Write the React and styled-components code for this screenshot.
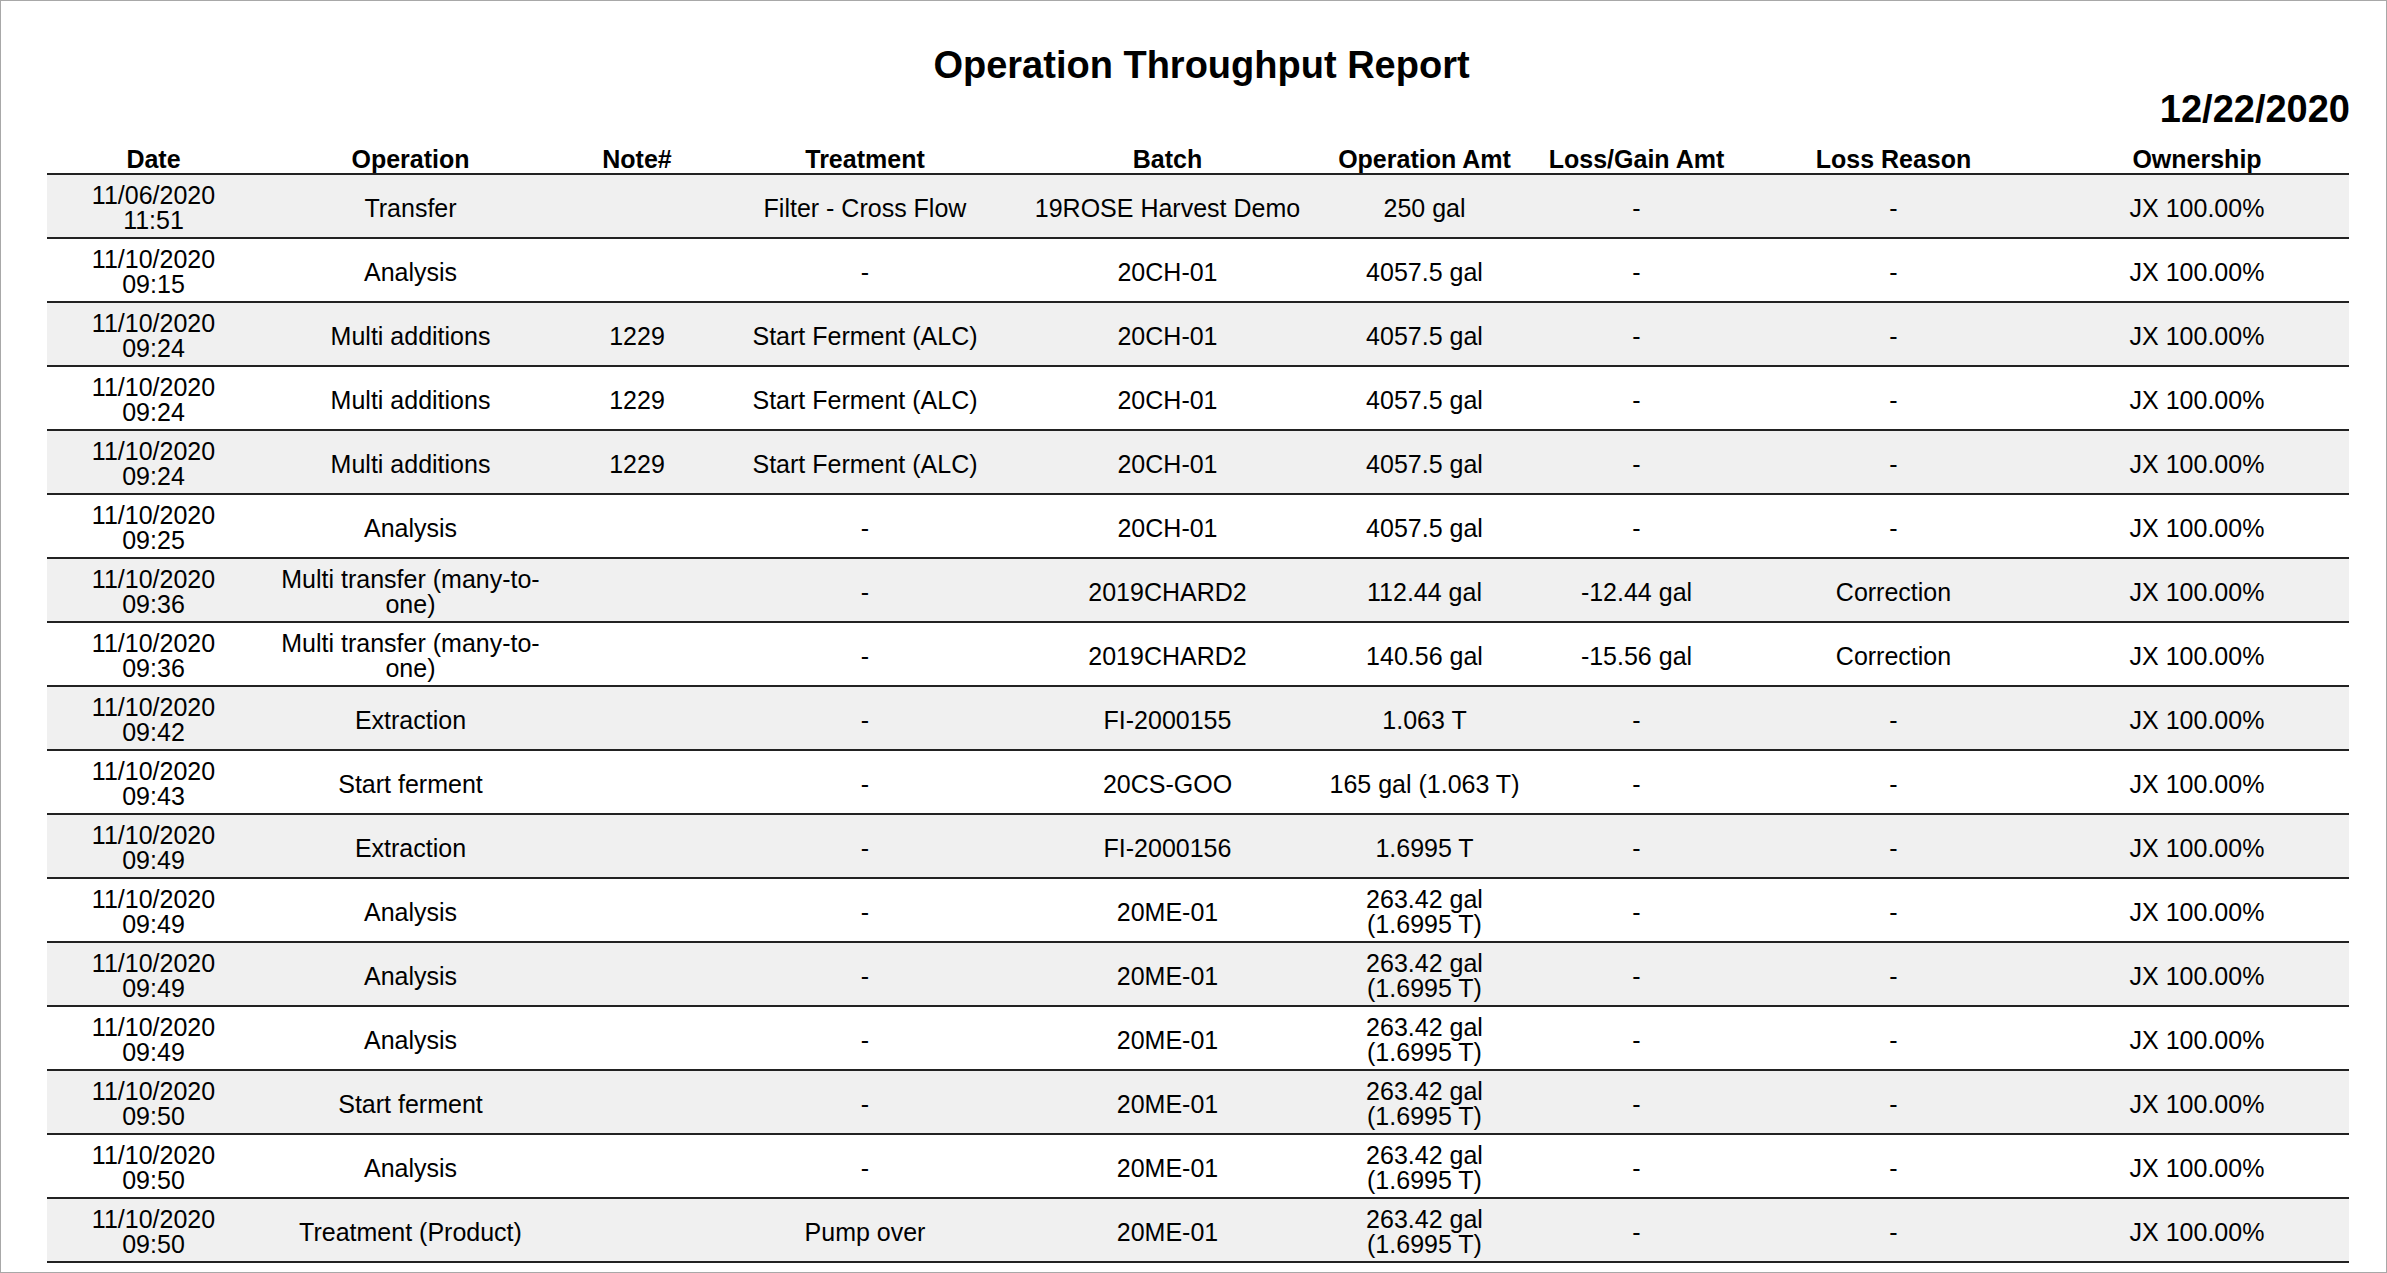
import React from 'react';
import styled, { createGlobalStyle } from 'styled-components';

const Global = createGlobalStyle`
  body { margin: 0; font-family: "Liberation Sans", Arial, sans-serif; color: #000; background: #fff; }
`;

const Frame = styled.div`
  width: 2387px;
  height: 1273px;
  box-sizing: border-box;
  border: 1px solid #a8a8a8;
  overflow: hidden;
  padding: 42px 36px 0 46px;
`;

const Title = styled.h1`
  margin: 0;
  font-size: 38px;
  line-height: 44px;
  font-weight: bold;
  text-align: center;
  padding-left: 6px;
`;

const ReportDate = styled.div`
  font-size: 38px;
  line-height: 44px;
  font-weight: bold;
  text-align: right;
  padding-right: 0;
`;

const Table = styled.table`
  width: 2302px;
  border-collapse: collapse;
  table-layout: fixed;
  font-size: 25px;
`;

const Th = styled.th`
  font-weight: bold;
  height: 41px;
  vertical-align: bottom;
  padding: 0 0 1px;
  line-height: 26px;
  border-bottom: 2px solid #222;
`;

const Row = styled.tr`
  background: ${(p) => (p.$shaded ? '#f0f0f0' : '#fff')};
  border-bottom: 2px solid #222;
`;

const Td = styled.td`
  height: 64px;
  padding: 4px ${(p) => p.$pad ?? 0}px 0;
  text-align: center;
  vertical-align: middle;
  line-height: 25px;
  box-sizing: border-box;
`;

const cols = [213, 301, 152, 304, 301, 213, 211, 303, 304];
const heads = ['Date', 'Operation', 'Note#', 'Treatment', 'Batch', 'Operation Amt', 'Loss/Gain Amt', 'Loss Reason', 'Ownership'];

const rows = [
  ['11/06/2020', '11:51', 'Transfer', '', 'Filter - Cross Flow', '19ROSE Harvest Demo', '250 gal', '-', '-'],
  ['11/10/2020', '09:15', 'Analysis', '', '-', '20CH-01', '4057.5 gal', '-', '-'],
  ['11/10/2020', '09:24', 'Multi additions', '1229', 'Start Ferment (ALC)', '20CH-01', '4057.5 gal', '-', '-'],
  ['11/10/2020', '09:24', 'Multi additions', '1229', 'Start Ferment (ALC)', '20CH-01', '4057.5 gal', '-', '-'],
  ['11/10/2020', '09:24', 'Multi additions', '1229', 'Start Ferment (ALC)', '20CH-01', '4057.5 gal', '-', '-'],
  ['11/10/2020', '09:25', 'Analysis', '', '-', '20CH-01', '4057.5 gal', '-', '-'],
  ['11/10/2020', '09:36', 'Multi transfer (many-to-one)', '', '-', '2019CHARD2', '112.44 gal', '-12.44 gal', 'Correction'],
  ['11/10/2020', '09:36', 'Multi transfer (many-to-one)', '', '-', '2019CHARD2', '140.56 gal', '-15.56 gal', 'Correction'],
  ['11/10/2020', '09:42', 'Extraction', '', '-', 'FI-2000155', '1.063 T', '-', '-'],
  ['11/10/2020', '09:43', 'Start ferment', '', '-', '20CS-GOO', '165 gal (1.063 T)', '-', '-'],
  ['11/10/2020', '09:49', 'Extraction', '', '-', 'FI-2000156', '1.6995 T', '-', '-'],
  ['11/10/2020', '09:49', 'Analysis', '', '-', '20ME-01', '263.42 gal (1.6995 T)', '-', '-'],
  ['11/10/2020', '09:49', 'Analysis', '', '-', '20ME-01', '263.42 gal (1.6995 T)', '-', '-'],
  ['11/10/2020', '09:49', 'Analysis', '', '-', '20ME-01', '263.42 gal (1.6995 T)', '-', '-'],
  ['11/10/2020', '09:50', 'Start ferment', '', '-', '20ME-01', '263.42 gal (1.6995 T)', '-', '-'],
  ['11/10/2020', '09:50', 'Analysis', '', '-', '20ME-01', '263.42 gal (1.6995 T)', '-', '-'],
  ['11/10/2020', '09:50', 'Treatment (Product)', '', 'Pump over', '20ME-01', '263.42 gal (1.6995 T)', '-', '-'],
];

export default function App() {
  return (
    <Frame>
      <Global />
      <Title>Operation Throughput Report</Title>
      <ReportDate>12/22/2020</ReportDate>
      <Table>
        <colgroup>
          {cols.map((w, i) => <col key={i} style={{ width: w }} />)}
        </colgroup>
        <thead>
          <tr>{heads.map((h) => <Th key={h}>{h}</Th>)}</tr>
        </thead>
        <tbody>
          {rows.map((r, i) => (
            <Row key={i} $shaded={i % 2 === 0}>
              <Td>{r[0]}<br />{r[1]}</Td>
              <Td $pad={16}>{r[2]}</Td>
              <Td>{r[3]}</Td>
              <Td>{r[4]}</Td>
              <Td>{r[5]}</Td>
              <Td $pad={r[6].length > 18 ? 30 : 0}>{r[6]}</Td>
              <Td>{r[7]}</Td>
              <Td>{r[8]}</Td>
              <Td>JX 100.00%</Td>
            </Row>
          ))}
        </tbody>
      </Table>
    </Frame>
  );
}
